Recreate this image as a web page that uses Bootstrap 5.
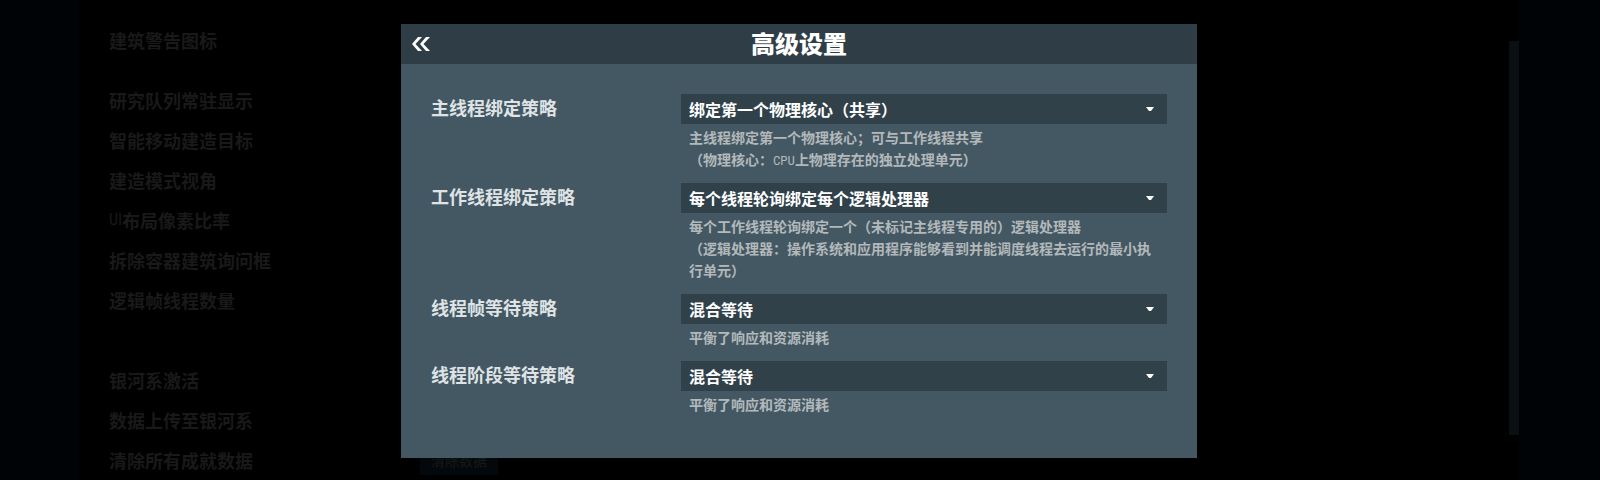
<!DOCTYPE html>
<html lang="zh-CN">
<head>
<meta charset="utf-8">
<meta name="viewport" content="width=device-width, initial-scale=1">
<title>高级设置</title>
<link href="https://cdn.jsdelivr.net/npm/bootstrap@5.3.0/dist/css/bootstrap.min.css" rel="stylesheet">
<style>
  body { background: #000305; color: #fff; font-family: "Noto Sans CJK SC", sans-serif; font-weight: 600; }
  .screen { height: 100vh; }
  .backdrop-panel { background: #000001; margin: 0 81px 0 79px; padding-left: 30px; }
  .option-list { padding-top: 20px; font-size: 18px; color: #191919; }
  .option-row { height: 40px; }
  .option-row.section-end { margin-bottom: 20px; }
  .option-row.group-end { margin-bottom: 40px; }
  .option-name { width: 311px; }
  .btn-clear { background: #02080b; color: #191919; font-size: 14px; line-height: 22px; padding: 4px; width: 78px; font-weight: 400; }
  .scroll-track { width: 10px; padding: 41px 0 45px; background: #000; }
  .scroll-thumb { background: #0a0f11; }
  .overlay { padding: 24px 2px 22px 0; }
  .dialog-box { width: 796px; max-width: 100%; background: #435863; }
  .dialog-head { height: 40px; background: #2f3e46; }
  .dialog-title { font-size: 24px; line-height: 38px; font-weight: 900; }
  .btn-back { width: 40px; height: 40px; padding: 0; }
  .dialog-content { padding: 30px 30px 43px; gap: 13px; }
  .setting { grid-template-columns: 250px 1fr; }
  .setting-label { font-size: 18px; line-height: 26px; color: #dfe3e5; }
  .setting-select { height: 30px; padding: 0 32px 0 8px; border: 0; border-radius: 0; color: #fff; font-size: 16px; line-height: 30px; font-weight: 600;
    background: #30414a url("data:image/svg+xml,%3Csvg xmlns='http://www.w3.org/2000/svg' viewBox='0 0 8 4'%3E%3Cpath fill='%23fff' d='M0 0h8L5 4H3z'/%3E%3C/svg%3E") no-repeat right 13px center / 8px 4px; }
  .setting-help { font-size: 14px; line-height: 22px; color: #b3b8bb; padding: 2px 8px 0; text-spacing-trim: space-all; }
  .latin { font-family: "Roboto Condensed", "Open Sans Condensed", "Liberation Sans", sans-serif; font-weight: 400; line-height: 1; }
  .setting-help .latin { font-size: 13px; }
  .option-list .latin { font-size: 16px; }
</style>
</head>
<body class="overflow-hidden">
<div class="screen position-relative overflow-hidden">
  <main class="backdrop-panel d-flex h-100 overflow-hidden">
    <div class="option-list flex-grow-1">
      <div class="option-row section-end d-flex align-items-center">建筑警告图标</div>
      <div class="option-row d-flex align-items-center">研究队列常驻显示</div>
      <div class="option-row d-flex align-items-center">智能移动建造目标</div>
      <div class="option-row d-flex align-items-center">建造模式视角</div>
      <div class="option-row d-flex align-items-center"><span class="latin">UI</span>布局像素比率</div>
      <div class="option-row d-flex align-items-center">拆除容器建筑询问框</div>
      <div class="option-row group-end d-flex align-items-center">逻辑帧线程数量</div>
      <div class="option-row d-flex align-items-center">银河系激活</div>
      <div class="option-row d-flex align-items-center">数据上传至银河系</div>
      <div class="option-row d-flex align-items-center"><span class="option-name">清除所有成就数据</span><button type="button" class="btn btn-clear rounded-0 border-0">清除数据</button></div>
    </div>
    <div class="scroll-track d-flex"><div class="scroll-thumb w-100"></div></div>
  </main>

  <div class="overlay position-absolute top-0 start-0 w-100 h-100 d-flex justify-content-center align-items-start">
    <section class="dialog-box" role="dialog" aria-labelledby="dialogTitle">
      <header class="dialog-head position-relative">
        <h1 id="dialogTitle" class="dialog-title text-center m-0">高级设置</h1>
        <button type="button" class="btn btn-back border-0 position-absolute top-0 start-0 d-flex align-items-center justify-content-center" aria-label="返回">
          <svg width="18" height="14" viewBox="0 0 18 14" fill="#fff"><path d="M6 0h4L3.500 7 10 14H6L0 7zM14 0h4l-6.500 7L18 14h-4L8 7z"/></svg>
        </button>
      </header>
      <form class="dialog-content d-flex flex-column">
        <div class="setting d-grid">
          <label class="setting-label" for="mainBind">主线程绑定策略</label>
          <div>
            <select id="mainBind" class="form-select setting-select"><option>绑定第一个物理核心（共享）</option></select>
            <div class="setting-help">主线程绑定第一个物理核心；可与工作线程共享<br>（物理核心：<span class="latin">CPU</span>上物理存在的独立处理单元）</div>
          </div>
        </div>
        <div class="setting d-grid">
          <label class="setting-label" for="workBind">工作线程绑定策略</label>
          <div>
            <select id="workBind" class="form-select setting-select"><option>每个线程轮询绑定每个逻辑处理器</option></select>
            <div class="setting-help">每个工作线程轮询绑定一个（未标记主线程专用的）逻辑处理器<br>（逻辑处理器：操作系统和应用程序能够看到并能调度线程去运行的最小执行单元）</div>
          </div>
        </div>
        <div class="setting d-grid">
          <label class="setting-label" for="frameWait">线程帧等待策略</label>
          <div>
            <select id="frameWait" class="form-select setting-select"><option>混合等待</option></select>
            <div class="setting-help">平衡了响应和资源消耗</div>
          </div>
        </div>
        <div class="setting d-grid">
          <label class="setting-label" for="phaseWait">线程阶段等待策略</label>
          <div>
            <select id="phaseWait" class="form-select setting-select"><option>混合等待</option></select>
            <div class="setting-help">平衡了响应和资源消耗</div>
          </div>
        </div>
      </form>
    </section>
  </div>
</div>
<script src="https://cdn.jsdelivr.net/npm/bootstrap@5.3.0/dist/js/bootstrap.bundle.min.js"></script>
</body>
</html>
